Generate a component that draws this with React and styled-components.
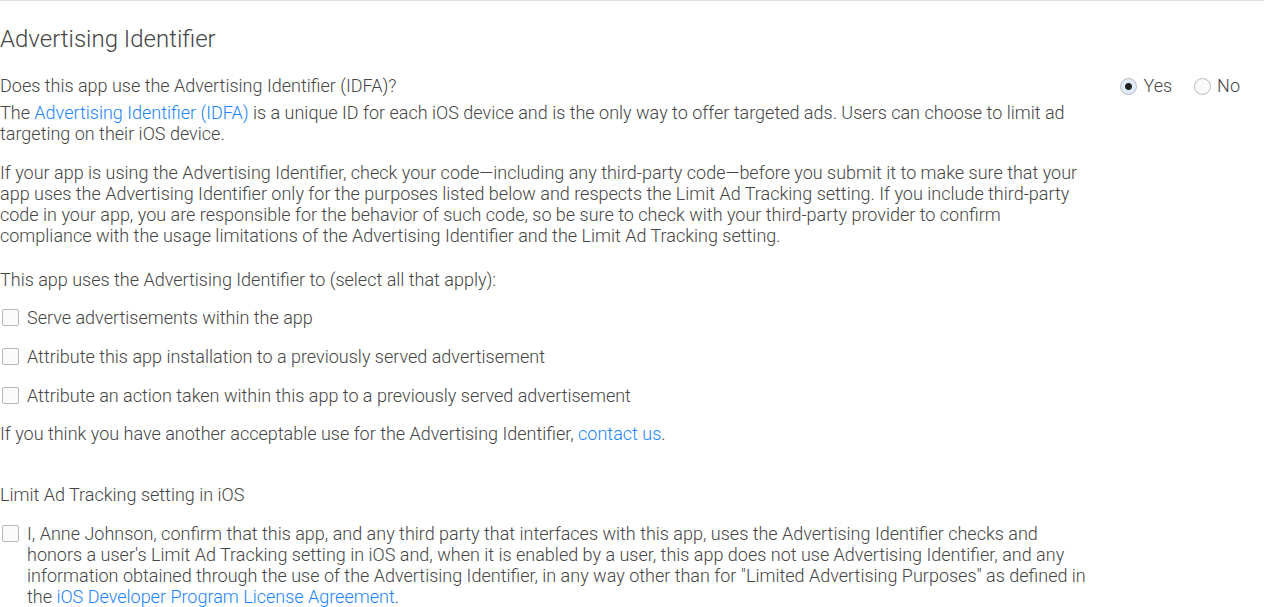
import React from "react";
import styled, { createGlobalStyle } from "styled-components";

const Global = createGlobalStyle`
  * { box-sizing: border-box; }
  body {
    margin: 0;
    background: #fff;
    color: #454545;
    font: 300 18px/21px Roboto, "Liberation Sans", Arial, sans-serif;
  }
`;

const Page = styled.main`
  border-top: 1px solid #dfdfdf;
  padding-top: 23px;
`;

const Title = styled.h1`
  margin: 0 0 21px;
  font-size: 24px;
  line-height: 30px;
  font-weight: 300;
`;

const QuestionRow = styled.fieldset`
  display: flex;
  justify-content: space-between;
  margin: 0 0 6px;
  padding: 0 24px 0 0;
  border: 0;
`;

const Radios = styled.div`
  display: flex;
  gap: 22px;
`;

const Option = styled.label`
  display: flex;
  align-items: flex-start;
  gap: ${(p) => (p.$radio ? 6 : 8)}px;
`;

const Radio = styled.input.attrs({ type: "radio" })`
  appearance: none;
  width: 17px;
  height: 17px;
  margin: 3px 0 0;
  border: 1px solid #b8b8b8;
  border-radius: 50%;
  background: #fafafa;
  &:checked {
    background: radial-gradient(circle, #222 0 3px, #e0ecfb 4px);
  }
`;

const Checkbox = styled.input.attrs({ type: "checkbox" })`
  appearance: none;
  flex: none;
  width: 17px;
  height: 17px;
  margin: 2px 0 0 2px;
  border: 1px solid #b8b8b8;
  border-radius: 2px;
  background: #fafafa;
`;

const Body = styled.div`
  max-width: 1090px;
`;

const Text = styled.p`
  margin: 0 0 ${(p) => p.$gap || 18}px;
`;

const Options = styled.div`
  display: flex;
  flex-direction: column;
  gap: 18px;
  margin-bottom: 17px;
`;

const Link = styled.a`
  color: #1a84ff;
  text-decoration: none;
`;

const uses = [
  "Serve advertisements within the app",
  "Attribute this app installation to a previously served advertisement",
  "Attribute an action taken within this app to a previously served advertisement",
];

export default function App() {
  return (
    <Page>
      <Global />
      <Title>Advertising Identifier</Title>
      <QuestionRow>
        <span>Does this app use the Advertising Identifier (IDFA)?</span>
        <Radios>
          <Option $radio><Radio name="idfa" defaultChecked />Yes</Option>
          <Option $radio><Radio name="idfa" />No</Option>
        </Radios>
      </QuestionRow>
      <Body>
        <Text>The <Link href="#idfa">Advertising Identifier (IDFA)</Link> is a unique ID for each iOS device and is the only way to offer targeted ads. Users can choose to limit ad targeting on their iOS device.</Text>
        <Text $gap={23}>If your app is using the Advertising Identifier, check your code—including any third-party code—before you submit it to make sure that your app uses the Advertising Identifier only for the purposes listed below and respects the Limit Ad Tracking setting. If you include third-party code in your app, you are responsible for the behavior of such code, so be sure to check with your third-party provider to confirm compliance with the usage limitations of the Advertising Identifier and the Limit Ad Tracking setting.</Text>
        <Text $gap={17}>This app uses the Advertising Identifier to (select all that apply):</Text>
        <Options>
          {uses.map((u) => <Option key={u}><Checkbox />{u}</Option>)}
        </Options>
        <Text $gap={40}>If you think you have another acceptable use for the Advertising Identifier, <Link href="#contact">contact us</Link>.</Text>
        <Text>Limit Ad Tracking setting in iOS</Text>
        <Option><Checkbox /><span>I, Anne Johnson, confirm that this app, and any third party that interfaces with this app, uses the Advertising Identifier checks and honors a user's Limit Ad Tracking setting in iOS and, when it is enabled by a user, this app does not use Advertising Identifier, and any information obtained through the use of the Advertising Identifier, in any way other than for "Limited Advertising Purposes" as defined in the <Link href="#license">iOS Developer Program License Agreement</Link>.</span></Option>
      </Body>
    </Page>
  );
}
